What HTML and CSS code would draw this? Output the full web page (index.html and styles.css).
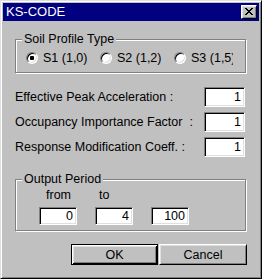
FILE: index.html
```html
<!DOCTYPE html>
<html lang="en">
  <head>
    <meta charset="UTF-8" />
    <title>KS-CODE</title>
    <link rel="stylesheet" href="styles.css">
  </head>
  <body>
    <div class="window">
      <div class="title-bar">
        <span class="title-text">KS-CODE</span>
        <button class="close-btn" type="button" aria-label="Close">
          <svg width="8" height="7" viewBox="0 0 8 7" shape-rendering="crispEdges">
            <path d="M0 0h2v1H0z M6 0h2v1H6z M1 1h2v1H1z M5 1h2v1H5z M2 2h4v1H2z M3 3h2v1H3z M2 4h4v1H2z M1 5h2v1H1z M5 5h2v1H5z M0 6h2v1H0z M6 6h2v1H6z" fill="#000" />
          </svg>
        </button>
      </div>
      <form class="dialog-body">
        <div class="group soil-group">
          <span class="group-title">Soil Profile Type</span>
          <div class="radio-row">
            <label class="radio"><input type="radio" name="soil" value="s1" checked /><span>S1 (1,0)</span></label>
            <label class="radio"><input type="radio" name="soil" value="s2" /><span>S2 (1,2)</span></label>
            <label class="radio radio-last"><input type="radio" name="soil" value="s3" /><span>S3 (1,5)</span></label>
          </div>
        </div>

        <div class="field-list">
          <div class="field-row">
            <label>Effective Peak Acceleration :</label>
            <input class="field" type="text" value="1" />
          </div>
          <div class="field-row">
            <label>Occupancy Importance Factor&nbsp;&nbsp;:</label>
            <input class="field" type="text" value="1" />
          </div>
          <div class="field-row">
            <label>Response Modification Coeff. :</label>
            <input class="field" type="text" value="1" />
          </div>
        </div>

        <div class="group period-group">
          <span class="group-title">Output Period</span>
          <div class="period-grid">
            <span class="period-label label-from">from</span>
            <span class="period-label label-to">to</span>
            <span class="period-label"></span>
            <input class="field period-field" type="text" value="0" />
            <input class="field period-field" type="text" value="4" />
            <input class="field period-field" type="text" value="100" />
          </div>
        </div>

        <div class="buttons">
          <button class="btn btn-default" type="submit">OK</button>
          <button class="btn" type="button">Cancel</button>
        </div>
      </form>
    </div>
  </body>
</html>
```

FILE: styles.css
```css
body {
  margin: 0;
  padding: 0;
  font-family: "Liberation Sans", Arial, sans-serif;
  font-size: 12.5px;
  color: #000000;
}

.window {
  box-sizing: border-box;
  width: 262px;
  height: 279px;
  padding: 2px;
  background-color: #c0c0c0;
  border: 1px solid;
  border-color: #dfdfdf #000000 #000000 #dfdfdf;
  box-shadow: inset 1px 1px 0 #ffffff, inset -1px -1px 0 #808080;
}

.title-bar {
  display: flex;
  align-items: center;
  justify-content: space-between;
  height: 18px;
  padding: 0 2px 0 3px;
  background-color: #000080; /* classic navy */
  color: #ffffff;
}

.title-text {
  font-size: 13px;
  line-height: 14px;
}

.close-btn {
  box-sizing: border-box;
  display: flex;
  align-items: center;
  justify-content: center;
  width: 16px;
  height: 14px;
  padding: 0 0 1px 0;
  background-color: #c0c0c0;
  border: 1px solid;
  border-color: #ffffff #000000 #000000 #ffffff;
  box-shadow: inset 1px 1px 0 #dfdfdf, inset -1px -1px 0 #808080;
}

.close-btn svg {
  display: block;
}

.dialog-body {
  margin: 0;
  padding: 0 13px 0 12px;
}

/* etched frame */
.group {
  position: relative;
  border: 1px solid #808080;
  box-shadow: inset 1px 1px 0 #ffffff, 1px 1px 0 #ffffff;
}

.group-title {
  position: absolute;
  top: -8px;
  left: 6px;
  padding: 0 2px;
  line-height: 14px;
  background-color: #c0c0c0;
}

.soil-group {
  margin-top: 18px;
  padding: 11px 0 7px 10px;
}

.radio-row {
  display: flex;
  height: 14px;
}

.radio {
  display: flex;
  align-items: center;
  width: 74px;
  line-height: 14px;
  white-space: nowrap;
}

/* label runs past its box in the original dialog */
.radio-last {
  width: 59px;
  overflow: hidden;
}

.radio input {
  appearance: none;
  box-sizing: border-box;
  flex: none;
  width: 12px;
  height: 12px;
  margin: 0 5px 0 0;
  border-radius: 50%;
  background-color: #ffffff;
  border: 1px solid;
  border-color: #808080 #ffffff #ffffff #808080;
  box-shadow: inset 1px 1px 0 #000000, inset -1px -1px 0 #dfdfdf;
}

.radio input:checked {
  background: radial-gradient(circle, #000000 2px, #ffffff 2.5px);
}

.field-list {
  display: flex;
  flex-direction: column;
  gap: 5px;
  margin-top: 14px;
}

.field-row {
  display: flex;
  align-items: center;
  justify-content: space-between;
  height: 20px;
  padding-right: 1px;
  line-height: 14px;
}

.field {
  box-sizing: border-box;
  width: 41px;
  height: 20px;
  margin: 0;
  padding: 0 3px;
  font-family: "Liberation Sans", Arial, sans-serif;
  font-size: 12.5px;
  text-align: right;
  color: #000000;
  background-color: #ffffff;
  border: 1px solid;
  border-color: #808080 #ffffff #ffffff #808080;
  box-shadow: inset 1px 1px 0 #000000, inset -1px -1px 0 #dfdfdf;
  outline: none;
}

.period-group {
  margin-top: 22px;
  padding: 8px 0 5px 23px;
}

.period-grid {
  display: grid;
  grid-template-columns: repeat(3, 38px);
  column-gap: 18px;
  row-gap: 5px;
}

.period-label {
  height: 14px;
  line-height: 14px;
}

.label-from {
  padding-left: 7px;
}

.label-to {
  padding-left: 4px;
}

.period-field {
  width: 38px;
  height: 18px;
}

.buttons {
  display: flex;
  justify-content: flex-end;
  gap: 1px;
  margin-top: 13px;
  margin-right: -1px;
}

.btn {
  box-sizing: border-box;
  width: 88px;
  height: 21px;
  padding: 0;
  font-family: "Liberation Sans", Arial, sans-serif;
  font-size: 12.5px;
  color: #000000;
  background-color: #c0c0c0;
  border: 1px solid;
  border-color: #ffffff #000000 #000000 #ffffff;
  box-shadow: inset 1px 1px 0 #dfdfdf, inset -1px -1px 0 #808080;
}

.btn-default {
  width: 87px;
  border-color: #000000;
  box-shadow: inset 1px 1px 0 #ffffff, inset -1px -1px 0 #000000,
    inset 2px 2px 0 #dfdfdf, inset -2px -2px 0 #808080;
}

.btn:focus {
  outline: none;
}
```
